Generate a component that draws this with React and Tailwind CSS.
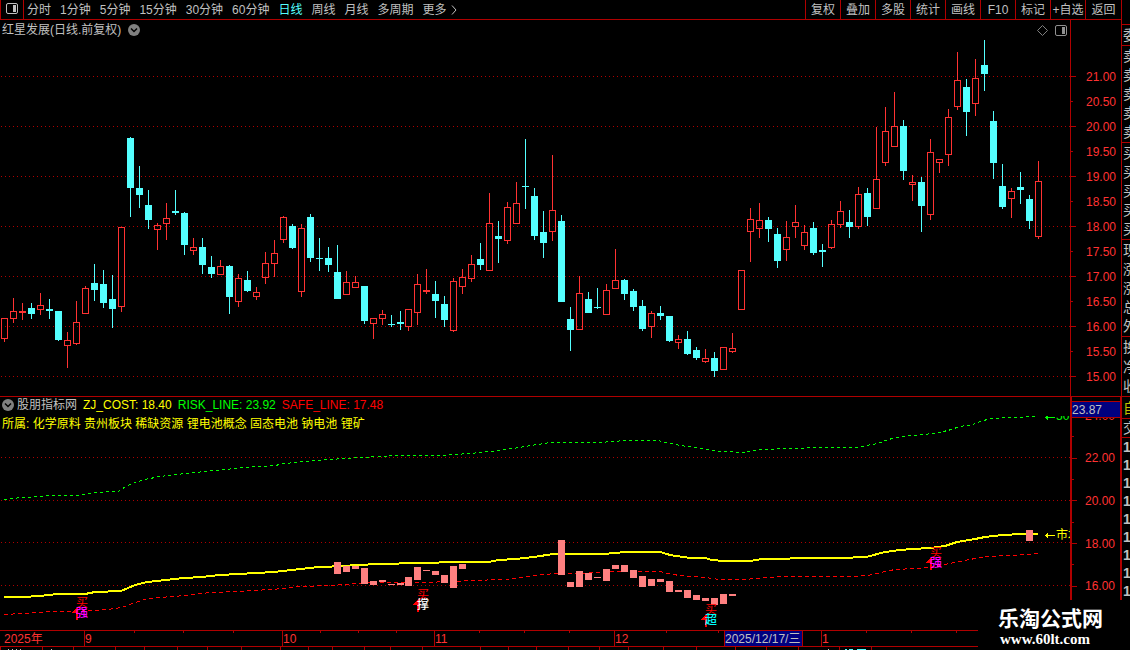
import { useState } from 'react'

const PERIODS = ['分时', '1分钟', '5分钟', '15分钟', '30分钟', '60分钟', '日线', '周线', '月线', '多周期', '更多']
const TOOLS = ['复权', '叠加', '多股', '统计', '画线', 'F10', '标记', '+自选', '返回']
const PRICES = ['21.00', '20.50', '20.00', '19.50', '19.00', '18.50', '18.00', '17.50', '17.00', '16.50', '16.00', '15.50', '15.00']
const LEVELS = ['24.00', '', '22.00', '', '20.00', '', '18.00', '', '16.00']

// [up, high, body top, body bottom, low]
const CANDLES = [
  [1, 318, 318, 339, 342], [1, 298, 311, 319, 323], [1, 303, 311, 313, 320], [0, 303, 308, 314, 319],
  [1, 293, 305, 310, 315], [0, 299, 309, 311, 319], [0, 311, 311, 340, 341], [1, 332, 340, 346, 368],
  [1, 301, 322, 344, 345], [1, 286, 288, 314, 314], [0, 264, 283, 290, 301], [0, 270, 284, 303, 308],
  [0, 275, 299, 309, 328], [1, 227, 227, 307, 312], [0, 137, 138, 188, 217], [0, 166, 188, 195, 208],
  [0, 190, 205, 220, 229], [1, 223, 225, 230, 250], [1, 203, 218, 224, 240], [0, 190, 211, 213, 215],
  [0, 212, 213, 245, 255], [1, 238, 247, 251, 255], [0, 238, 247, 265, 274], [0, 256, 267, 274, 278],
  [1, 260, 266, 275, 275], [0, 265, 266, 297, 314], [1, 274, 278, 302, 307], [0, 271, 280, 291, 292],
  [1, 287, 292, 297, 300], [1, 252, 263, 278, 284], [1, 240, 253, 264, 277], [1, 216, 217, 240, 243],
  [0, 224, 226, 248, 249], [1, 224, 228, 292, 297], [0, 214, 217, 258, 262], [0, 238, 258, 259, 271],
  [0, 247, 258, 265, 272], [0, 245, 272, 299, 299], [1, 271, 282, 295, 295], [1, 276, 282, 288, 288],
  [0, 286, 286, 321, 324], [1, 318, 318, 324, 339], [1, 310, 314, 319, 325], [0, 315, 324, 325, 327],
  [0, 311, 322, 324, 330], [1, 309, 309, 327, 331], [1, 274, 284, 313, 325], [1, 269, 290, 292, 294],
  [0, 281, 294, 301, 318], [0, 296, 304, 320, 327], [1, 278, 281, 331, 332], [1, 269, 277, 287, 294],
  [1, 255, 264, 279, 282], [0, 243, 259, 265, 270], [1, 193, 223, 271, 271], [0, 221, 236, 239, 263],
  [1, 202, 207, 241, 244], [1, 182, 203, 224, 224], [0, 139, 186, 187, 209], [0, 188, 196, 236, 240],
  [0, 211, 232, 243, 258], [1, 155, 210, 232, 241], [0, 215, 221, 302, 302], [0, 307, 319, 330, 351],
  [1, 276, 293, 330, 330], [0, 292, 299, 313, 313], [0, 288, 307, 308, 309], [1, 284, 290, 315, 315],
  [1, 249, 280, 289, 289], [0, 279, 280, 294, 300], [0, 289, 291, 307, 311], [0, 300, 306, 329, 331],
  [1, 311, 313, 327, 338], [0, 306, 313, 316, 320], [0, 316, 316, 341, 342], [1, 335, 339, 343, 349],
  [0, 331, 339, 354, 355], [0, 347, 350, 358, 360], [1, 349, 358, 362, 363], [0, 352, 358, 371, 377],
  [1, 347, 347, 370, 370], [1, 333, 348, 352, 353], [1, 270, 270, 310, 310], [1, 208, 219, 232, 262],
  [1, 203, 220, 229, 238], [0, 217, 220, 229, 242], [0, 228, 234, 261, 268], [1, 221, 237, 250, 261],
  [1, 205, 222, 227, 238], [1, 225, 232, 246, 250], [0, 222, 228, 253, 255], [0, 244, 250, 252, 267],
  [1, 220, 224, 248, 249], [1, 201, 211, 225, 228], [0, 210, 222, 227, 238], [1, 187, 194, 227, 229],
  [0, 188, 193, 217, 226], [1, 127, 179, 209, 209], [1, 107, 131, 163, 166], [1, 92, 126, 147, 147],
  [0, 120, 126, 171, 180], [1, 175, 182, 185, 201], [0, 177, 182, 206, 232], [1, 139, 152, 215, 220],
  [1, 159, 159, 163, 173], [1, 109, 117, 155, 166], [1, 52, 80, 107, 110], [0, 79, 87, 112, 136],
  [1, 59, 78, 104, 116], [0, 40, 65, 74, 91], [0, 111, 121, 163, 179], [0, 164, 186, 207, 209],
  [1, 188, 191, 199, 218], [0, 172, 187, 190, 204], [0, 195, 199, 221, 229], [1, 161, 181, 237, 239],
]

// [candle index, top, bottom]
const BARS = [
  [37, 562, 574], [38, 566, 572], [39, 566, 569], [40, 568, 584], [41, 581, 585], [42, 580, 582],
  [43, 584, 585], [44, 583, 585], [45, 577, 586], [46, 567, 580], [47, 570, 571], [48, 571, 575],
  [49, 575, 583], [50, 566, 588], [51, 564, 569], [62, 540, 575], [63, 582, 587], [64, 571, 587],
  [65, 573, 580], [66, 577, 578], [67, 569, 581], [68, 565, 569], [69, 565, 572], [70, 570, 578],
  [71, 576, 587], [72, 579, 586], [73, 579, 582], [74, 581, 592], [75, 590, 592], [76, 590, 598],
  [77, 595, 600], [78, 598, 601], [79, 598, 605], [80, 594, 604], [81, 594, 596], [114, 530, 541],
]

const COST = '4,597 22,597 40,596 58,594 85,594 95,592 121,591 128,588 135,585 147,582 166,580 184,578 202,577 220,575 256,573 274,572 292,570 319,567 345,566 355,565 382,564 417,563 462,562 489,562 498,560 516,559 534,557 553,554 604,554 625,552 660,552 670,555 690,558 705,558 712,560 724,561 750,561 762,559 786,559 794,558 840,558 866,557 885,552 900,550 912,549 930,548 945,546 957,542 975,539 985,537 1003,535 1021,534 1038,534'
const RISK = '4,499 22,497 40,496 49,495 76,495 95,492 118,491 126,486 135,482 145,479 160,476 185,473 215,470 245,467 275,465 285,463 315,460 345,458 397,455 440,455 470,453 500,450 525,446 550,442 600,442 625,440 658,440 675,444 700,448 720,451 745,452 760,449 790,448 820,447 855,447 878,443 888,439 903,436 933,433 948,430 960,426 973,424 983,420 993,418 1010,417 1038,416'
const SAFE = '4,614 22,613 50,611 75,611 90,610 108,609 122,607 132,603 145,599 160,597 185,595 210,592 240,591 285,588 300,586 330,585 345,584 375,582 420,582 455,581 470,580 505,579 520,577 540,574 560,573 580,573 595,572 625,571 660,571 672,574 690,576 705,577 720,579 745,579 765,577 790,576 855,576 868,575 885,571 895,569 915,568 930,567 950,563 965,560 985,556 1010,555 1038,553'

const MARKS = [
  { x: 76, y: 613, text: '强', color: '#ff00ff' },
  { x: 417, y: 605, text: '撑', color: '#ffffff' },
  { x: 705, y: 620, text: '超', color: '#00ffff' },
  { x: 930, y: 563, text: '强', color: '#ff00ff' },
]

const TICKS = [134, 183, 233, 320, 358, 396, 479, 524, 569, 666, 718, 866, 911, 956]
const LOWER_TICKS = [0, 42, 73, 115, 144, 177, 207, 241, 280, 308, 332, 364, 390, 422, 480, 508, 536, 568, 599, 628, 663, 696, 735, 766, 798, 839, 871]

const candleX = (i) => (i < 45 ? 4 : 3) + 9 * i

function ChevronDot() {
  return (
    <svg width="12" height="12" viewBox="0 0 12 12" className="shrink-0">
      <circle cx="6" cy="6" r="6" fill="#808080" />
      <path d="M3 4.5 6 7.5 9 4.5" fill="none" stroke="#000" strokeWidth="1.5" />
    </svg>
  )
}

function PanelIcon({ color = '#c0c0c0' }) {
  return (
    <svg width="12" height="11" viewBox="0 0 12 11" className="shrink-0">
      <rect x="0.5" y="0.5" width="11" height="10" rx="1.5" fill="none" stroke={color} />
      <rect x="7" y="2" width="3" height="7" fill={color} />
    </svg>
  )
}

function GridLine({ y }) {
  return <line x1="1" x2="100%" y1={y + 0.5} y2={y + 0.5} stroke="#b00000" strokeDasharray="1 3" />
}

function Candle({ index, candle }) {
  const [up, high, top, bottom, low] = candle
  const x = candleX(index)
  const color = up ? '#ff3232' : '#54ffff'
  return (
    <g fill={color}>
      {top > high && <rect x={x} y={high} width="1" height={top - high} />}
      {low > bottom && <rect x={x} y={bottom} width="1" height={low - bottom} />}
      {up ? (
        <rect x={x - 2.5} y={top + 0.5} width="6" height={bottom - top - 1} fill="none" stroke={color} />
      ) : (
        <rect x={x - 3} y={top} width="7" height={bottom - top} />
      )}
    </g>
  )
}

function Mark({ x, y, text, color }) {
  return (
    <g>
      <text x={x} y={y - 6} fill="#ff0000">买</text>
      <path d={`M${x + 1} ${y - 6}L${x - 4} ${y}H${x}V${y + 7}H${x + 2}V${y - 6}Z`} fill="#ff0000" />
      <text x={x} y={y + 4} fill={color} fontWeight="500">{text}</text>
    </g>
  )
}

function AxisRow({ label, minor, className }) {
  return (
    <div className={`flex items-center justify-between pr-[5px] ${className}`}>
      <span className={`h-px bg-[#b00000] ${minor ? 'w-0.5' : 'w-[5px]'}`} />
      <span>{label}</span>
    </div>
  )
}

function QuoteGroup({ chars, className }) {
  return (
    <div className={`flex flex-col border-b border-[#b00000] ${className}`}>
      {chars.map((char, i) => (
        <span key={i} className="flex flex-1 items-center">{char}</span>
      ))}
    </div>
  )
}

export default function App() {
  const [period, setPeriod] = useState('日线')

  return (
    <div className="relative flex min-h-screen overflow-hidden bg-black font-['Liberation_Sans','Noto_Sans_CJK_SC',sans-serif] text-xs leading-none text-[#c0c0c0]">
      <main className="flex min-w-0 flex-1 flex-col">
        <header className="flex h-5 shrink-0 items-stretch justify-between border-b border-[#b00000] whitespace-nowrap">
          <nav className="flex items-stretch gap-[9px]">
            <button aria-label="侧栏" className="-mr-1.5 flex w-6 items-center justify-center border-x border-[#b00000] pb-0.5">
              <PanelIcon />
            </button>
            {PERIODS.map((name) => (
              <button
                key={name}
                onClick={() => setPeriod(name)}
                className={`flex items-center gap-1 ${name === period ? 'text-[#54ffff]' : ''}`}
              >
                {name}
                {name === '更多' && (
                  <svg width="6" height="10" viewBox="0 0 6 10" fill="none" stroke="currentColor">
                    <path d="M1 0.5 5 5 1 9.5" />
                  </svg>
                )}
              </button>
            ))}
          </nav>
          <div className="flex items-stretch">
            {TOOLS.map((name) => (
              <button key={name} className="flex w-[35px] items-center justify-center border-l border-[#b00000] last:w-9">
                {name}
              </button>
            ))}
          </div>
        </header>

        <section className="flex shrink-0 border-b border-[#b00000]">
          <div className="min-w-0 flex-1">
            <div className="flex h-5 items-center justify-between pr-[3px] pl-0.5">
              <h1 className="flex items-center gap-[7px]">红星发展(日线.前复权)<ChevronDot /></h1>
              <div className="flex items-center gap-[7px]">
                <svg width="11" height="11" viewBox="0 0 11 11" fill="none" stroke="#808080">
                  <path d="M5.5 0.5 10.5 5.5 5.5 10.5 0.5 5.5Z" />
                </svg>
                <PanelIcon color="#909090" />
              </div>
            </div>
            <svg className="block h-[356px] w-full" shapeRendering="crispEdges">
              <g transform="translate(0 -40)">
                {[76, 126, 176, 226, 276, 326, 376].map((y) => <GridLine key={y} y={y} />)}
                {CANDLES.map((candle, i) => <Candle key={i} index={i} candle={candle} />)}
              </g>
            </svg>
          </div>
          <div className="w-[51px] shrink-0 border-l border-[#b00000] pt-11 text-[#ff3232]">
            {PRICES.map((price, i) => <AxisRow key={price} label={price} minor={i % 2 === 1} className="h-[25px]" />)}
          </div>
        </section>

        <section className="flex shrink-0">
          <div className="relative min-w-0 flex-1">
            <div className="absolute top-0 left-0.5 whitespace-nowrap">
              <div className="flex h-4 items-center gap-1.5">
                <h2 className="flex items-center gap-[3px]"><ChevronDot />股朋指标网</h2>
                <span className="text-[#ffff00]">ZJ_COST: 18.40</span>
                <span className="text-[#00ff00]">RISK_LINE: 23.92</span>
                <span className="text-[#ff0000]">SAFE_LINE: 17.48</span>
              </div>
              <p className="flex h-[22px] items-center text-[#ffff00]">所属: 化学原料 贵州板块 稀缺资源 锂电池概念 固态电池 钠电池 锂矿</p>
            </div>
            <svg className="block h-[233px] w-full" shapeRendering="crispEdges" fontSize="12">
              <defs>
                <clipPath id="riskLabel"><rect x="1040" y="416" width="30" height="12" /></clipPath>
              </defs>
              <g transform="translate(0 -397)">
                {[457, 500, 542, 585].map((y) => <GridLine key={y} y={y} />)}
                <polyline points={RISK} transform="translate(0 0.5)" fill="none" stroke="#00ff00" strokeDasharray="3 3" />
                <polyline points={SAFE} transform="translate(0 0.5)" fill="none" stroke="#ff0000" strokeDasharray="4 3" />
                <polyline points={COST} fill="none" stroke="#ffff00" strokeWidth="2" />
                {BARS.map(([i, top, bottom]) => (
                  <rect key={i} x={candleX(i) - 3} y={top} width="7" height={bottom - top} fill="#ff8080" />
                ))}
                {MARKS.map((mark) => <Mark key={mark.x} {...mark} />)}
                <g clipPath="url(#riskLabel)" fill="#00ff00">
                  <path d="M1055 417.5H1046M1048 415.5 1046 417.5 1048 419.5" fill="none" stroke="#00ff00" />
                  <text x="1056" y="420">50</text>
                </g>
                <path d="M1055 535.5H1046M1048 533.5 1046 535.5 1048 537.5" fill="none" stroke="#ffff00" />
                <text x="1056" y="539" fill="#ffff00">市场</text>
              </g>
            </svg>
          </div>
          <div className="relative flex w-[51px] shrink-0 flex-col border-r border-l-2 border-[#b00000] pt-2 text-[#ff3232]">
            <div className="flex h-48 flex-col">
              {LEVELS.map((level, i) => <AxisRow key={i} label={level} minor={!level} className="flex-1" />)}
            </div>
            <div className="absolute inset-x-0 top-1 flex h-[17px] items-center border-y border-[#b00000] bg-[#000080] text-[#c0c0c0]">23.87</div>
          </div>
        </section>

        <footer className="shrink-0">
          <div className="relative flex h-[17px] items-stretch border-y border-[#b00000] text-[#ff3232]">
            <svg className="absolute top-0 left-0 h-0.5 w-full" shapeRendering="crispEdges" fill="#b00000">
              {TICKS.map((x) => <rect key={x} x={x} width="1" height="2" />)}
            </svg>
            <span className="flex w-[84px] items-center pl-1">2025年</span>
            <span className="flex w-[198px] items-center border-l border-[#b00000]">9</span>
            <span className="flex w-[152px] items-center border-l border-[#b00000]">10</span>
            <span className="flex w-[180px] items-center border-l border-[#b00000]">11</span>
            <span className="flex w-[110px] items-center border-l border-[#b00000]">12</span>
            <span className="flex w-[79px] items-center border-x border-[#b00000] bg-[#000080] whitespace-nowrap text-[#c0c0c0]">2025/12/17/三</span>
            <span className="ml-[18px] flex flex-1 items-center border-l border-[#b00000]">1</span>
          </div>
          <svg className="block h-[3px] w-full" shapeRendering="crispEdges" fill="#b00000">
            {LOWER_TICKS.map((x) => <rect key={x} x={x} width="1" height="3" />)}
            <path d="M8 2h1v1h-1zM12 2h1v1h-1zM16 2h1v1h-1zM20 2h1v1h-1zM51 2h1v1h-1zM828 2h1v1h-1z" fill="#c0c0c0" />
            <path d="M845 2h2v1h-2zM849 2h4v1h-4zM857 2h9v1h-9z" fill="#54ffff" />
          </svg>
        </footer>
      </main>

      <aside className="w-[9px] shrink-0 overflow-hidden border-l border-[#b00000] pt-6 text-sm leading-none">
        <QuoteGroup chars={['委']} className="h-[22px] border-t pl-px" />
        <QuoteGroup chars={['卖', '卖', '卖', '卖', '卖']} className="h-[97px] pl-px" />
        <QuoteGroup chars={['买', '买', '买', '买', '买']} className="h-[97px] pl-px" />
        <QuoteGroup chars={['现', '涨', '涨', '总', '外']} className="h-[97px] pl-px" />
        <QuoteGroup chars={['换', '净', '收']} className="h-[60px] pl-px" />
        <QuoteGroup chars={['自']} className="h-[22px] pl-px text-[#c0c000]" />
        <QuoteGroup chars={['交']} className="h-[19px] pl-px" />
        <div className="flex flex-col pl-px">
          {Array.from({ length: 9 }, (_, i) => <span key={i} className="flex h-[18px] items-center font-bold">1</span>)}
        </div>
      </aside>

      <div className="absolute right-0 bottom-0 flex h-[50px] w-38 flex-col gap-1 bg-black pt-[9px] pl-5 text-white">
        <strong className="text-[21px] leading-5 whitespace-nowrap">乐淘公式网</strong>
        <a href="#home" className="pl-0.5 font-['Liberation_Serif',serif] text-[15px] leading-3 font-bold">www.60lt.com</a>
      </div>
    </div>
  )
}
